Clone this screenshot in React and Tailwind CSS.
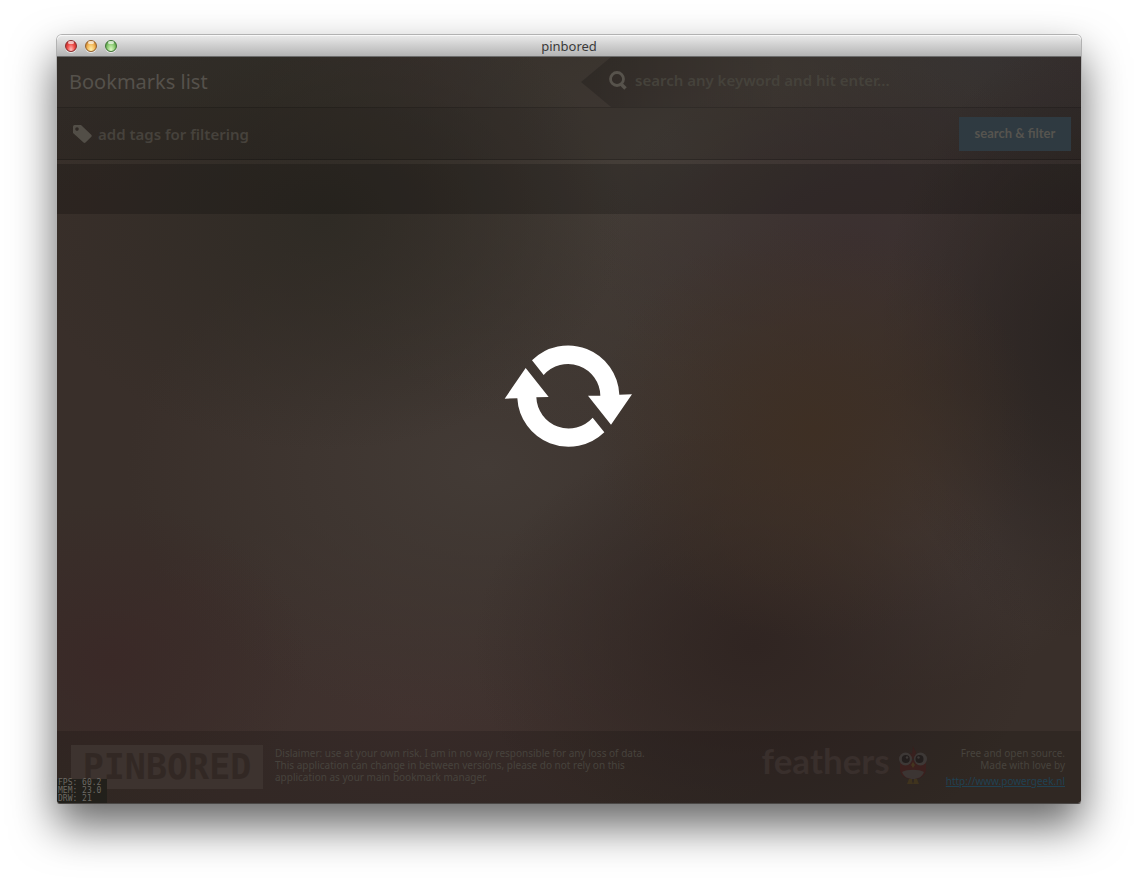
import React from "react";

const lights = [
  "border-[#8a2a2a] bg-[radial-gradient(ellipse_at_50%_90%,#ffc4c0_0%,#f2504c_50%,#a81f20_100%)]",
  "border-[#95602a] bg-[radial-gradient(ellipse_at_50%_90%,#fff3b0_0%,#f3b656_55%,#b06a22_100%)]",
  "border-[#3f7434] bg-[radial-gradient(ellipse_at_50%_90%,#e0fbc8_0%,#8bcb72_55%,#3f8236_100%)]",
];

function TitleBar() {
  return (
    <header className="relative flex h-[22px] shrink-0 items-center justify-center rounded-t-[5px] border-b border-[#6b6b6b] bg-linear-to-b from-[#ebebeb] to-[#b4b4b4] shadow-[inset_0_1px_0_#f8f8f8]">
      <div className="absolute left-2 top-[5px] flex gap-2">
        {lights.map((c, i) => (
          <button
            key={i}
            type="button"
            aria-label={["Close", "Minimize", "Zoom"][i]}
            className={`relative h-3 w-3 rounded-full border shadow-[0_1px_0_#e8e8e8] ${c}`}
          >
            <span className="absolute left-[2px] top-0 h-[3px] w-[6px] rounded-full bg-white/65" />
          </button>
        ))}
      </div>
      <h1 className="text-[13px] leading-5 text-[#3a3a3a]">pinbored</h1>
    </header>
  );
}

function Bird() {
  return (
    <svg viewBox="0 0 30 40" className="h-10 w-[30px]" aria-hidden="true">
      <path d="M15 1 L17 6 L18 5 L17.500 14 H12.500 L12 8 L14 9 Z" fill="#38201e" />
      <path d="M2 15 H28 V24 C28 31 22 34 15 34 S2 31 2 24 Z" fill="#3b201e" />
      <path d="M4 27 C9 24 21 24 26 27 C24 32 20 34 15 34 S6 32 4 27 Z" fill="#3c3533" />
      <circle cx="7.500" cy="14" r="6.500" fill="#3d3836" />
      <circle cx="22.500" cy="14" r="6.500" fill="#3d3836" />
      <circle cx="7.800" cy="14" r="4" fill="#231e1d" />
      <circle cx="21.500" cy="14" r="4" fill="#231e1d" />
      <circle cx="9" cy="12.500" r="1.200" fill="#3d3836" />
      <circle cx="20.500" cy="12.500" r="1.200" fill="#3d3836" />
      <path d="M15 17 L17 20 L15 23 L13 20 Z" fill="#44351f" />
      <path d="M11 34 H14 V36 L15 39 H9 Z M16 34 H19 L21 39 H15 L16 36 Z" fill="#3f331d" />
    </svg>
  );
}

function Spinner() {
  return (
    <div className="pointer-events-none absolute inset-x-0 top-0 bottom-[68px] flex items-center justify-center" role="status" aria-label="Loading">
      <svg viewBox="45 40 384 312" className="h-[104px] w-32 overflow-visible" fill="#fff" aria-hidden="true">
        <path d="M126 89 A154 154 0 0 1 388 192 L426 191 L363 282 L294 195 L331 195 A97 97 0 0 0 161 133 Z" />
        <path d="M343 305 A154 154 0 0 1 82 203 L44 204 L107 112 L176 199 L139 200 A97 97 0 0 0 308 261 Z" />
      </svg>
    </div>
  );
}

export default function App() {
  return (
    <div className="flex min-h-screen flex-col bg-white px-14 pt-[34px] pb-[78px] font-['Noto_Sans','Open_Sans',sans-serif]">
      <div className="flex flex-1 flex-col rounded-t-[6px] rounded-b-[4px] border border-black/30 border-b-[#4a4745] shadow-[0_22px_44px_rgba(0,0,0,0.6)]">
        <TitleBar />
        <main className="relative flex flex-1 flex-col overflow-hidden rounded-b-[3px] bg-[#392f2a] bg-[image:radial-gradient(ellipse_300px_230px_at_26%_22%,#2f2b25_0%,transparent_100%),radial-gradient(ellipse_220px_210px_at_74%_50%,#3e2f24_0%,transparent_100%),radial-gradient(ellipse_280px_220px_at_68%_79%,#302522_0%,transparent_100%),radial-gradient(ellipse_200px_300px_at_100%_38%,#2a2422_0%,transparent_100%),radial-gradient(ellipse_200px_160px_at_5%_81%,#3a2927_0%,transparent_100%),radial-gradient(ellipse_260px_180px_at_78%_25%,#3b3030_0%,transparent_100%),radial-gradient(ellipse_420px_300px_at_60%_12%,#46403a_0%,transparent_100%),radial-gradient(ellipse_360px_260px_at_42%_55%,#433b36_0%,transparent_100%),radial-gradient(ellipse_200px_160px_at_83%_64%,#423835_0%,transparent_100%),radial-gradient(ellipse_380px_200px_at_35%_88%,#41322f_0%,transparent_100%),radial-gradient(ellipse_500px_140px_at_10%_0%,#38342e_0%,transparent_100%),radial-gradient(ellipse_300px_180px_at_90%_0%,#3c3737_0%,transparent_100%)]">
          <section className="flex h-[51px] shrink-0 items-stretch border-b border-black/20 bg-black/10">
            <h2 className="flex flex-1 items-center pl-3 text-xl leading-7 text-[#55514b]">Bookmarks list</h2>
            <label className="flex w-[500px] items-center gap-2 bg-linear-to-r from-black/20 to-transparent to-40% pb-1 pl-7 [clip-path:polygon(0_50%,30px_0,100%_0,100%_100%,30px_100%)]">
              <svg viewBox="0 0 18 19" className="h-[19px] w-[18px] shrink-0" fill="none" stroke="#57534c" aria-hidden="true">
                <circle cx="8" cy="8" r="6.500" strokeWidth="2.800" />
                <path d="M12 13 L16.500 17.500" strokeWidth="3.600" />
              </svg>
              <input
                type="text"
                aria-label="Search"
                placeholder="search any keyword and hit enter..."
                className="min-w-0 flex-1 bg-transparent text-[15px] leading-5 font-semibold text-[#4a463f] outline-none placeholder:text-[#45423b] placeholder:opacity-100"
              />
            </label>
          </section>

          <section className="flex h-[52px] shrink-0 items-center border-b border-black/20 bg-black/15 pl-4 pr-[10px]">
            <label className="flex flex-1 items-center gap-[6px]">
              <svg viewBox="0 0 19 18" className="h-[18px] w-[19px] shrink-0" fill="#524e47" aria-hidden="true">
                <path fillRule="evenodd" d="M0 1.500 Q0 0 1.500 0 H8 L18.500 10 Q19 11 18.400 11.800 L12.500 17.500 Q11.500 18.300 10.500 17.500 L0 8 Z M4 2.300 A1.800 1.800 0 1 0 4 5.900 A1.800 1.800 0 1 0 4 2.300 Z" />
              </svg>
              <input
                type="text"
                aria-label="Tags"
                placeholder="add tags for filtering"
                className="min-w-0 flex-1 bg-transparent text-[15px] leading-5 font-semibold text-[#4f4b44] outline-none placeholder:text-[#46423c] placeholder:opacity-100"
              />
            </label>
            <button type="button" className="h-[34px] w-28 bg-[#2f3a41] font-['Lato',sans-serif] text-[13px] font-bold text-[#56544f]">
              search &amp; filter
            </button>
          </section>

          <div className="mt-1 h-[50px] shrink-0 bg-black/20" />
          <div className="flex-1" />

          <footer className="flex h-[72px] shrink-0 items-start bg-black/15 pl-[14px] pr-4 pt-[14px] text-[10px] leading-3 text-[#47433d]">
            <div className="flex h-11 w-48 shrink-0 items-center justify-center bg-[#3d332f] font-['DejaVu_Sans_Mono',monospace] text-[35px] leading-none font-bold text-[#322824]">
              PINBORED
            </div>
            <p className="ml-3 mt-[2px] w-[400px]">
              Dislaimer: use at your own risk. I am in no way responsible for any loss of data.
              <br />
              This application can change in between versions, please do not rely on this
              <br />
              application as your main bookmark manager.
            </p>
            <div className="ml-auto flex items-start gap-2">
              <span className="font-['Lato',sans-serif] text-[35px] leading-[30px] font-bold text-[#392f2c]">feathers</span>
              <Bird />
            </div>
            <div className="ml-[18px] mt-[2px] text-right">
              <p>
                Free and open source.
                <br />
                Made with love by
              </p>
              <a href="http://www.powergeek.nl" className="mt-1 block text-[#204152] underline">
                http://www.powergeek.nl
              </a>
            </div>
          </footer>

          <Spinner />
          <div className="absolute bottom-0 left-0 w-[50px] bg-[#22201b] pl-px font-['DejaVu_Sans_Mono',monospace] text-[8px] leading-2 text-[#6c6963]">
            <p>FPS: 60.2</p>
            <p>MEM: 23.0</p>
            <p>DRW: 21</p>
          </div>
        </main>
      </div>
    </div>
  );
}
